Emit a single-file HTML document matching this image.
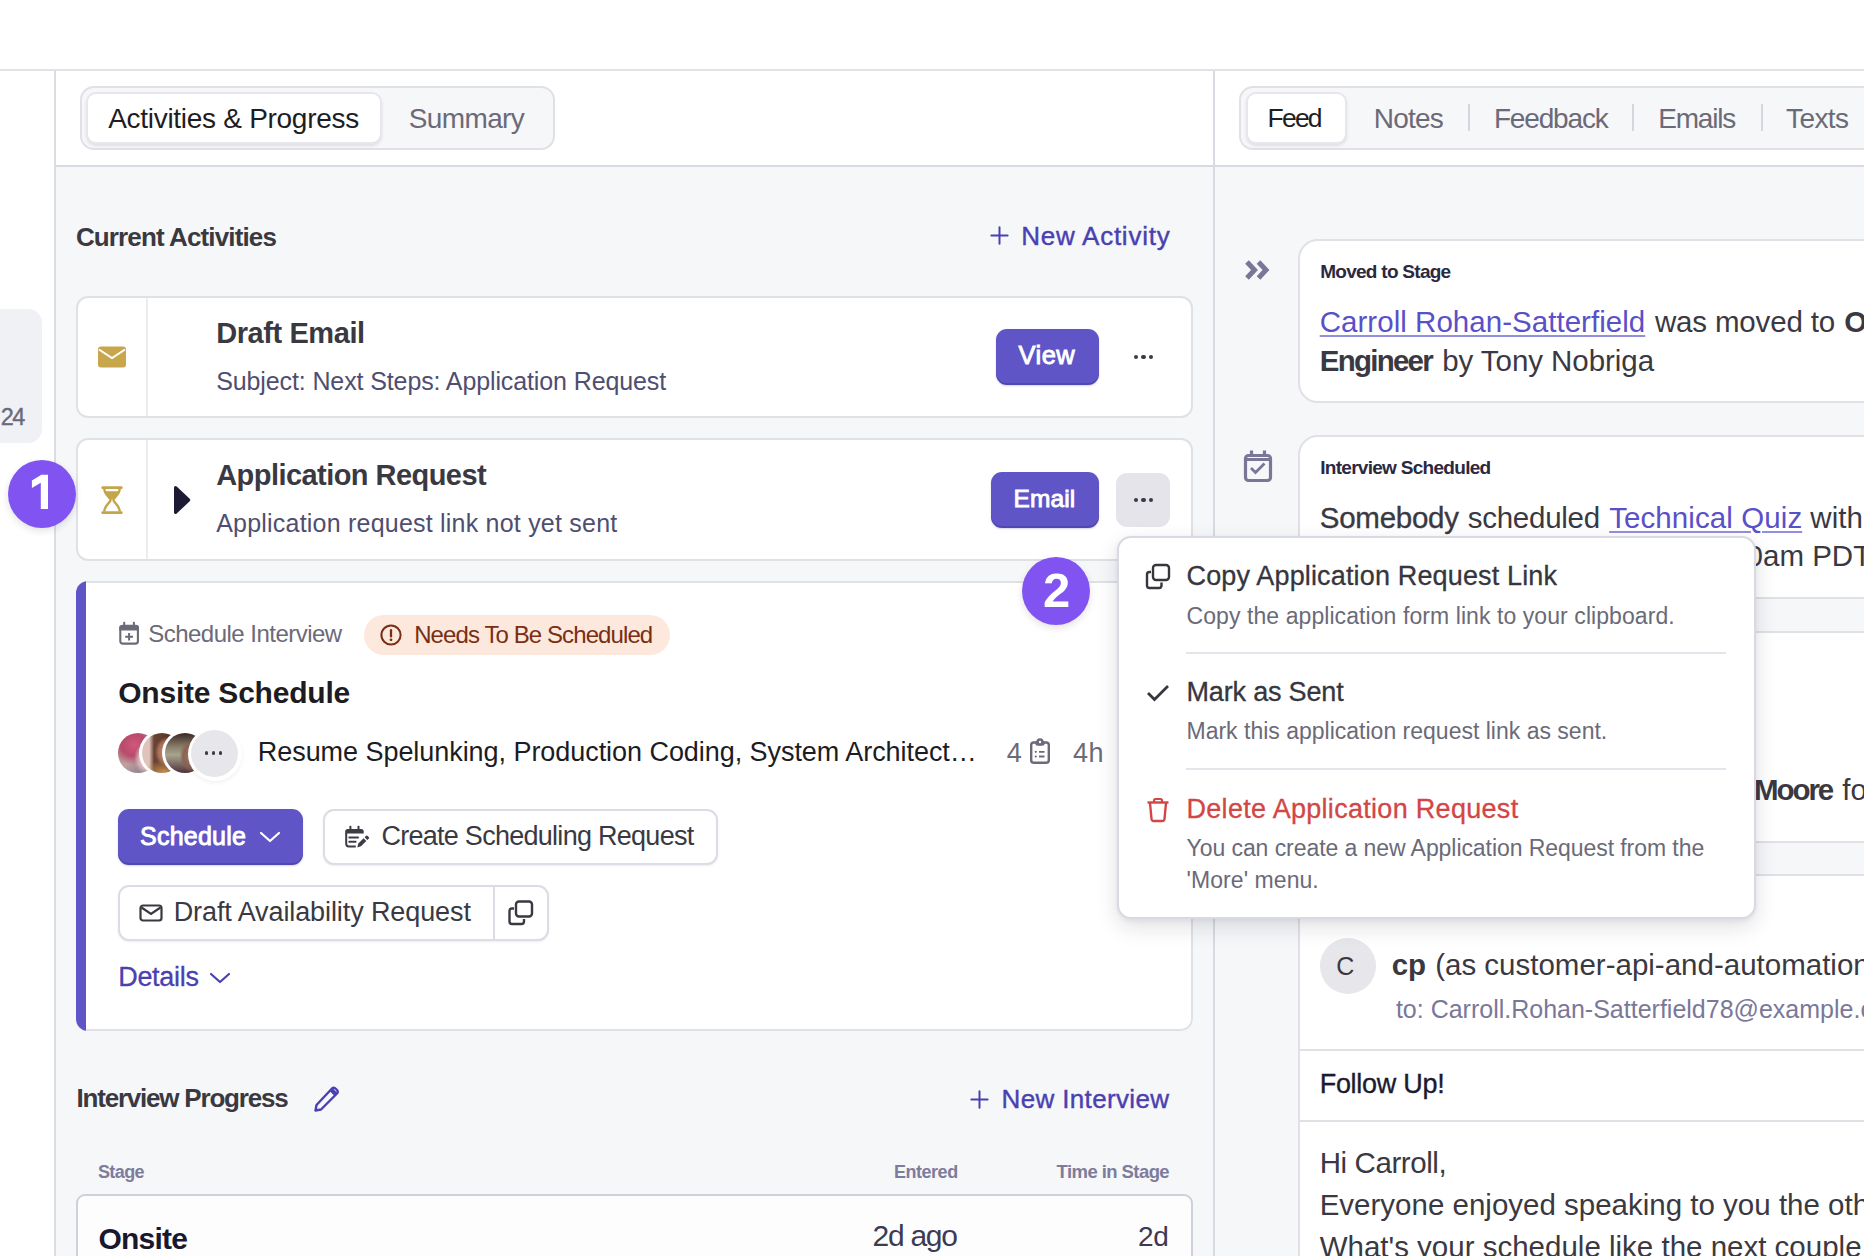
<!DOCTYPE html>
<html><head><meta charset="utf-8">
<style>
html,body{margin:0;padding:0;background:#fff;}
body{width:1864px;height:1256px;overflow:hidden;position:relative;font-family:"Liberation Sans",sans-serif;}
.b{position:absolute;}
.t{position:absolute;white-space:nowrap;}
</style></head><body>
<div class="b" style="left:0px;top:0px;width:1864px;height:70px;background:#fff;"></div>
<div class="b" style="left:0px;top:69px;width:1864px;height:2px;background:#e1e2e8;"></div>
<div class="b" style="left:0px;top:71px;width:54px;height:1185px;background:#fff;"></div>
<div class="b" style="left:54px;top:71px;width:2px;height:1185px;background:#dcdde3;"></div>
<div class="b" style="left:56px;top:71px;width:1157px;height:94px;background:#fff;"></div>
<div class="b" style="left:1215px;top:71px;width:649px;height:94px;background:#fff;"></div>
<div class="b" style="left:56px;top:165px;width:1808px;height:2px;background:#d8dae2;"></div>
<div class="b" style="left:56px;top:167px;width:1157px;height:1089px;background:#f6f7f9;"></div>
<div class="b" style="left:1215px;top:167px;width:649px;height:1089px;background:#f6f7f9;"></div>
<div class="b" style="left:1213px;top:71px;width:2px;height:1185px;background:#d8dae2;"></div>
<div class="b" style="left:-20px;top:309px;width:62px;height:134px;background:#f0f1f4;border-radius:14px;"></div>
<div class="t" style="left:0.70px;top:406.11px;font-size:23.50px;line-height:23.50px;color:#6b6a78;letter-spacing:-1.585px;-webkit-text-stroke:0.4px #6b6a78;">24</div>
<div class="b" style="left:80px;top:86px;width:475px;height:64px;background:#f6f7f9;border:2px solid #e0e0e7;border-radius:14px;box-sizing:border-box;"></div>
<div class="b" style="left:86px;top:92px;width:296px;height:51.5px;background:#fff;border:2px solid #e6e6ec;border-radius:10px;box-sizing:border-box;box-shadow:0 2px 3px rgba(30,30,60,0.10);"></div>
<div class="t" style="left:108.20px;top:105.00px;font-size:28.00px;line-height:28.00px;color:#1d1d22;letter-spacing:-0.288px;">Activities &amp; Progress</div>
<div class="t" style="left:408.80px;top:105.00px;font-size:28.00px;line-height:28.00px;color:#6b6a78;letter-spacing:-0.640px;">Summary</div>
<div class="b" style="left:1239px;top:86px;width:661px;height:64px;background:#f6f7f9;border:2px solid #e0e0e7;border-radius:14px;box-sizing:border-box;"></div>
<div class="b" style="left:1246px;top:92px;width:101px;height:51.5px;background:#fff;border:2px solid #e6e6ec;border-radius:10px;box-sizing:border-box;box-shadow:0 2px 3px rgba(30,30,60,0.10);"></div>
<div class="t" style="left:1267.60px;top:105.37px;font-size:26.50px;line-height:26.50px;color:#1d1d22;letter-spacing:-1.807px;">Feed</div>
<div class="t" style="left:1373.80px;top:105.00px;font-size:28.00px;line-height:28.00px;color:#6b6a78;letter-spacing:-0.770px;">Notes</div>
<div class="t" style="left:1493.90px;top:105.00px;font-size:28.00px;line-height:28.00px;color:#6b6a78;letter-spacing:-1.151px;">Feedback</div>
<div class="t" style="left:1658.20px;top:105.00px;font-size:28.00px;line-height:28.00px;color:#6b6a78;letter-spacing:-1.200px;">Emails</div>
<div class="t" style="left:1786.00px;top:105.00px;font-size:28.00px;line-height:28.00px;color:#6b6a78;letter-spacing:-0.595px;">Texts</div>
<div class="b" style="left:1468px;top:104px;width:2px;height:27px;background:#d6d6de;"></div>
<div class="b" style="left:1632px;top:104px;width:2px;height:27px;background:#d6d6de;"></div>
<div class="b" style="left:1761px;top:104px;width:2px;height:27px;background:#d6d6de;"></div>
<div class="t" style="left:75.90px;top:223.99px;font-size:26.00px;line-height:26.00px;color:#3a3942;letter-spacing:-0.871px;font-weight:700;">Current Activities</div>
<svg class="b" style="left:990px;top:226px" width="19" height="19" viewBox="0 0 21 21"><path d="M10.5 1.5v18M1.5 10.5h18" stroke="#4a40b0" stroke-width="2.2" fill="none" stroke-linecap="round"/></svg>
<div class="t" style="left:1021.20px;top:222.99px;font-size:26.00px;line-height:26.00px;color:#4a40b0;letter-spacing:0.760px;-webkit-text-stroke:0.4px #4a40b0;">New Activity</div>
<div class="b" style="left:76px;top:296px;width:1117px;height:122px;background:#fff;border:2px solid #e0e0e7;border-radius:12px;box-sizing:border-box;"></div>
<div class="b" style="left:146px;top:298px;width:2px;height:118px;background:#ececf1;"></div>
<svg class="b" style="left:97px;top:346px" width="30" height="22" viewBox="0 0 30 22"><rect x="1" y="0.5" width="28" height="21" rx="3" fill="#c8a74c"/><path d="M2 3.5 L15 12 L28 3.5" stroke="#fff" stroke-width="2" fill="none"/></svg>
<div class="t" style="left:216.20px;top:319.45px;font-size:29.00px;line-height:29.00px;color:#3a3942;letter-spacing:-0.412px;font-weight:700;">Draft Email</div>
<div class="t" style="left:216.20px;top:368.84px;font-size:25.00px;line-height:25.00px;color:#504e70;letter-spacing:-0.115px;">Subject: Next Steps: Application Request</div>
<div class="b" style="left:996px;top:329px;width:103px;height:56px;background:#5f55c6;border-radius:11px;box-shadow:inset 0 -2px 0 rgba(40,30,120,0.25), 0 1px 2px rgba(40,30,120,0.2);"></div>
<div class="t" style="left:1018.60px;top:343.41px;font-size:25.50px;line-height:25.50px;color:#fff;letter-spacing:0.458px;-webkit-text-stroke:0.9px #fff;">View</div>
<div class="b" style="left:1133.7px;top:354.5px;width:4.599999999999909px;height:4.600000000000023px;background:#3b3a44;border-radius:50%;"></div>
<div class="b" style="left:1141.2px;top:354.5px;width:4.599999999999909px;height:4.600000000000023px;background:#3b3a44;border-radius:50%;"></div>
<div class="b" style="left:1148.7px;top:354.5px;width:4.599999999999909px;height:4.600000000000023px;background:#3b3a44;border-radius:50%;"></div>
<div class="b" style="left:76px;top:438px;width:1117px;height:123px;background:#fff;border:2px solid #e0e0e7;border-radius:12px;box-sizing:border-box;"></div>
<div class="b" style="left:146px;top:440px;width:2px;height:119px;background:#ececf1;"></div>
<svg class="b" style="left:101px;top:486px" width="22" height="28" viewBox="0 0 22 28" fill="#c4a54a"><rect x="0.3" y="0.2" width="21.4" height="2.8" rx="1.3"/><rect x="0.3" y="25.2" width="21.4" height="2.8" rx="1.3"/><path d="M3.3 2.5 C3.3 9 9.6 11.5 9.6 14 C9.6 16.5 3.3 19 3.3 25.5 M18.7 2.5 C18.7 9 12.4 11.5 12.4 14 C12.4 16.5 18.7 19 18.7 25.5" stroke="#c4a54a" stroke-width="2.4" fill="none"/><path d="M4 5.3 H18 C17.5 9.5 12.5 11.5 11 13.8 C9.5 11.5 4.5 9.5 4 5.3Z"/></svg>
<svg class="b" style="left:173px;top:485px" width="18" height="30" viewBox="0 0 18 30"><polygon points="2.6,2.6 15.6,15 2.6,27.4" fill="#1d1b34" stroke="#1d1b34" stroke-width="3.2" stroke-linejoin="round"/></svg>
<div class="t" style="left:216.20px;top:461.45px;font-size:29.00px;line-height:29.00px;color:#3a3942;letter-spacing:-0.552px;font-weight:700;">Application Request</div>
<div class="t" style="left:216.20px;top:510.84px;font-size:25.00px;line-height:25.00px;color:#504e70;letter-spacing:0.215px;">Application request link not yet sent</div>
<div class="b" style="left:991px;top:472px;width:108px;height:56px;background:#5f55c6;border-radius:11px;box-shadow:inset 0 -2px 0 rgba(40,30,120,0.25), 0 1px 2px rgba(40,30,120,0.2);"></div>
<div class="t" style="left:1013.60px;top:487.26px;font-size:24.50px;line-height:24.50px;color:#fff;letter-spacing:0.113px;-webkit-text-stroke:0.9px #fff;">Email</div>
<div class="b" style="left:1116px;top:473px;width:54px;height:54px;background:#e4e4ea;border-radius:11px;"></div>
<div class="b" style="left:1133.7px;top:497.7px;width:4.599999999999909px;height:4.600000000000023px;background:#3b3a44;border-radius:50%;"></div>
<div class="b" style="left:1141.2px;top:497.7px;width:4.599999999999909px;height:4.600000000000023px;background:#3b3a44;border-radius:50%;"></div>
<div class="b" style="left:1148.7px;top:497.7px;width:4.599999999999909px;height:4.600000000000023px;background:#3b3a44;border-radius:50%;"></div>
<div class="b" style="left:76px;top:581px;width:1117px;height:450px;background:#fff;border-radius:12px;overflow:hidden;"><div class="b" style="left:0;top:0;width:10px;height:450px;background:#5f55c6;"></div><div class="b" style="left:10px;top:0;width:1107px;height:450px;border:2px solid #e0e0e7;border-left:none;border-radius:0 12px 12px 0;box-sizing:border-box;"></div></div>
<svg class="b" style="left:118px;top:621px" width="22" height="24" viewBox="0 0 22 24"><rect x="2.3" y="4.8" width="17.6" height="17.8" rx="2.4" stroke="#6b6a78" stroke-width="2.1" fill="none"/><path d="M1.3 9.4 V6.6 Q1.3 3.9 4 3.9 H18.2 Q20.9 3.9 20.9 6.6 V9.4 Z" fill="#6b6a78"/><rect x="5.2" y="0.8" width="2" height="4" rx="0.8" fill="#6b6a78"/><rect x="14.9" y="0.8" width="2" height="4" rx="0.8" fill="#6b6a78"/><path d="M11.1 12 v7.6 M7.2 15.8 h7.8" stroke="#6b6a78" stroke-width="2"/></svg>
<div class="t" style="left:148.20px;top:622.18px;font-size:24.00px;line-height:24.00px;color:#6b6a78;letter-spacing:-0.518px;">Schedule Interview</div>
<div class="b" style="left:364px;top:615px;width:306px;height:40px;background:#fde8de;border-radius:20px;"></div>
<svg class="b" style="left:378px;top:623px" width="26" height="26" viewBox="0 0 26 26"><circle cx="13" cy="12" r="9.6" stroke="#7a2e12" stroke-width="2" fill="none"/><path d="M13 7.2v6.2" stroke="#7a2e12" stroke-width="2.3" stroke-linecap="round"/><circle cx="13" cy="16.8" r="1.4" fill="#7a2e12"/></svg>
<div class="t" style="left:414.20px;top:622.68px;font-size:24.00px;line-height:24.00px;color:#7a2e12;letter-spacing:-0.902px;">Needs To Be Scheduled</div>
<div class="t" style="left:118.20px;top:677.61px;font-size:30.00px;line-height:30.00px;color:#1c1c22;letter-spacing:-0.218px;font-weight:700;">Onsite Schedule</div>
<div class="b" style="left:115.0px;top:730.0px;width:46.0px;height:46.0px;background:#fff;border-radius:50%;"></div>
<div class="b" style="left:118.0px;top:733.0px;width:40.0px;height:40.0px;background:radial-gradient(ellipse 34% 42% at 74% 64%, #eed8d6 0%, #dcbcbc 60%, rgba(220,188,188,0) 100%), radial-gradient(ellipse 58% 50% at 40% 30%, #d0587e 0%, #b84a6c 55%, rgba(184,74,108,0) 100%), linear-gradient(135deg, #a89080, #c0a0a0 50%, #6a6a88);border-radius:50%;"></div>
<div class="b" style="left:138.5px;top:730.0px;width:46.0px;height:46.0px;background:#fff;border-radius:50%;"></div>
<div class="b" style="left:141.5px;top:733.0px;width:40.0px;height:40.0px;background:radial-gradient(ellipse 30% 38% at 62% 48%, #c89478 0%, #a87058 70%, rgba(168,112,88,0) 100%), radial-gradient(ellipse 50% 30% at 55% 98%, #c89050 0%, rgba(200,144,80,0) 100%), linear-gradient(90deg, #e0c4bc 0 18%, #6a4434 30%, #4a2c1e 100%);border-radius:50%;"></div>
<div class="b" style="left:162.0px;top:730.0px;width:46.0px;height:46.0px;background:#fff;border-radius:50%;"></div>
<div class="b" style="left:165.0px;top:733.0px;width:40.0px;height:40.0px;background:radial-gradient(ellipse 32% 40% at 68% 58%, #a88070 0%, #8a6252 70%, rgba(138,98,82,0) 100%), linear-gradient(180deg, #3a2626 0%, #8a806a 35%, #a8a48e 55%, #50303a 100%);border-radius:50%;"></div>
<div class="b" style="left:187.5px;top:726.5px;width:54.0px;height:54.0px;background:#fff;border-radius:50%;box-shadow:0 2px 4px rgba(0,0,0,0.06);"></div>
<div class="b" style="left:190.8px;top:729.5px;width:47.0px;height:47.0px;background:#e6e6eb;border-radius:50%;"></div>
<div class="b" style="left:204.7px;top:751px;width:3.6000000000000227px;height:3.6000000000000227px;background:#3b3a44;border-radius:50%;"></div>
<div class="b" style="left:211.7px;top:751px;width:3.6000000000000227px;height:3.6000000000000227px;background:#3b3a44;border-radius:50%;"></div>
<div class="b" style="left:218.7px;top:751px;width:3.6000000000000227px;height:3.6000000000000227px;background:#3b3a44;border-radius:50%;"></div>
<div class="t" style="left:257.80px;top:739.14px;font-size:27.00px;line-height:27.00px;color:#1c1c22;letter-spacing:-0.053px;">Resume Spelunking, Production Coding, System Architect…</div>
<div class="t" style="left:1006.70px;top:739.94px;font-size:27.00px;line-height:27.00px;color:#6b6a78;letter-spacing:0.000px;">4</div>
<svg class="b" style="left:1030px;top:738px" width="20" height="26" viewBox="0 0 20 26" fill="#6b6a78"><rect x="1.2" y="4.5" width="17.6" height="20.3" rx="2.6" stroke="#6b6a78" stroke-width="2.4" fill="none"/><path d="M4.8 3.8 H15.2 L14 7.6 H6 Z"/><circle cx="10" cy="4" r="3.7"/><circle cx="10" cy="4" r="1.2" fill="#fff"/><circle cx="5.8" cy="13.8" r="1.1"/><circle cx="5.8" cy="18.5" r="1.1"/><path d="M9 13.8 H14.5 M9 18.5 H14.5" stroke="#6b6a78" stroke-width="1.8"/></svg>
<div class="t" style="left:1072.90px;top:739.94px;font-size:27.00px;line-height:27.00px;color:#6b6a78;letter-spacing:0.530px;">4h</div>
<div class="b" style="left:118px;top:809px;width:185px;height:56px;background:#5f55c6;border-radius:11px;box-shadow:inset 0 -2px 0 rgba(40,30,120,0.25), 0 1px 2px rgba(40,30,120,0.2);"></div>
<div class="t" style="left:140.10px;top:823.84px;font-size:25.00px;line-height:25.00px;color:#fff;letter-spacing:0.207px;-webkit-text-stroke:0.9px #fff;">Schedule</div>
<svg class="b" style="left:259px;top:830px" width="22" height="14" viewBox="0 0 22 14"><path d="M2 3 L11 11 L20 3" stroke="#fff" stroke-width="2.2" fill="none" stroke-linecap="round" stroke-linejoin="round"/></svg>
<div class="b" style="left:323px;top:809px;width:395px;height:56px;background:#fff;border:2px solid #dcdce4;border-radius:11px;box-sizing:border-box;box-shadow:0 1px 2px rgba(30,30,60,0.08);"></div>
<svg class="b" style="left:344px;top:825px" width="28" height="24" viewBox="0 0 28 24" fill="#3d3c44"><rect x="5.4" y="0.8" width="2" height="4" rx="0.8"/><rect x="13.5" y="0.8" width="2" height="4" rx="0.8"/><path d="M1.2 8.6 V6.6 Q1.2 4 3.8 4 H17.1 Q19.7 4 19.7 6.6 V8.6 Z"/><path d="M2.2 8 V18.8 Q2.2 21.4 4.8 21.4 H11.8" stroke="#3d3c44" stroke-width="2" fill="none"/><path d="M5.3 12.6 H14 M5.3 16.7 H11.6" stroke="#3d3c44" stroke-width="2" stroke-linecap="round"/><path d="M13.3 22.4 L14.3 18.6 L19.6 13.3 L22.3 16 L17 21.3 Z"/><path d="M20.6 12.3 L22.2 10.7 Q22.8 10.1 23.4 10.7 L24.9 12.2 Q25.5 12.8 24.9 13.4 L23.3 15 Z"/></svg>
<div class="t" style="left:381.40px;top:823.14px;font-size:27.00px;line-height:27.00px;color:#3a3942;letter-spacing:-0.725px;">Create Scheduling Request</div>
<div class="b" style="left:118px;top:885px;width:431px;height:56px;background:#fff;border:2px solid #dcdce4;border-radius:11px;box-sizing:border-box;box-shadow:0 1px 2px rgba(30,30,60,0.08);"></div>
<div class="b" style="left:493px;top:887px;width:2px;height:52px;background:#dcdce4;"></div>
<svg class="b" style="left:139px;top:904px" width="24" height="18" viewBox="0 0 24 18"><rect x="1.5" y="1.5" width="21" height="15" rx="2.5" stroke="#3a3942" stroke-width="2.2" fill="none"/><path d="M2.5 3.5 L12 10 L21.5 3.5" stroke="#3a3942" stroke-width="2.2" fill="none"/></svg>
<div class="t" style="left:173.70px;top:899.14px;font-size:27.00px;line-height:27.00px;color:#3a3942;letter-spacing:-0.096px;">Draft Availability Request</div>
<svg class="b" style="left:507px;top:900px" width="28" height="26" viewBox="0 0 28 26"><rect x="9" y="1.5" width="16" height="15" rx="3" stroke="#3a3942" stroke-width="2.4" fill="none"/><path d="M7 8.5 H5 Q2.5 8.5 2.5 11 V21.5 Q2.5 24 5 24 H14.5 Q17 24 17 21.5 V19" stroke="#3a3942" stroke-width="2.4" fill="none"/></svg>
<div class="t" style="left:118.20px;top:963.74px;font-size:27.00px;line-height:27.00px;color:#4a40b0;letter-spacing:-0.297px;-webkit-text-stroke:0.3px #4a40b0;">Details</div>
<svg class="b" style="left:209px;top:971px" width="22" height="14" viewBox="0 0 22 14"><path d="M2 3 L11 11 L20 3" stroke="#4a40b0" stroke-width="2.2" fill="none" stroke-linecap="round" stroke-linejoin="round"/></svg>
<div class="t" style="left:76.50px;top:1084.99px;font-size:26.00px;line-height:26.00px;color:#3a3942;letter-spacing:-1.206px;font-weight:700;">Interview Progress</div>
<svg class="b" style="left:312px;top:1085px" width="28" height="28" viewBox="0 0 28 28"><path d="M20 3.5 Q22 2 24 4 L25 5 Q26.5 7 25 8.5 L9 24.5 L3.5 25.5 L4.5 20 Z" stroke="#4a40b0" stroke-width="2.4" fill="none" stroke-linejoin="round"/><path d="M19 4.5 L24 9.5" stroke="#4a40b0" stroke-width="4"/></svg>
<svg class="b" style="left:970px;top:1089.5px" width="19" height="19" viewBox="0 0 21 21"><path d="M10.5 1.5v18M1.5 10.5h18" stroke="#4a40b0" stroke-width="2.2" fill="none" stroke-linecap="round"/></svg>
<div class="t" style="left:1001.60px;top:1085.99px;font-size:26.00px;line-height:26.00px;color:#4a40b0;letter-spacing:0.349px;-webkit-text-stroke:0.4px #4a40b0;">New Interview</div>
<div class="t" style="left:97.90px;top:1163.36px;font-size:18.00px;line-height:18.00px;color:#7e7c9c;letter-spacing:-0.587px;font-weight:700;">Stage</div>
<div class="t" style="left:893.90px;top:1163.46px;font-size:18.00px;line-height:18.00px;color:#7e7c9c;letter-spacing:-0.458px;font-weight:700;">Entered</div>
<div class="t" style="left:1056.60px;top:1163.04px;font-size:18.50px;line-height:18.50px;color:#7e7c9c;letter-spacing:-0.573px;font-weight:700;">Time in Stage</div>
<div class="b" style="left:76px;top:1194px;width:1117px;height:106px;background:#fcfdfc;border:2px solid #d0d0dc;border-radius:9px;box-sizing:border-box;"></div>
<div class="t" style="left:98.40px;top:1224.31px;font-size:30.00px;line-height:30.00px;color:#1a1830;letter-spacing:-0.780px;font-weight:700;">Onsite</div>
<div class="t" style="left:872.60px;top:1221.20px;font-size:30.00px;line-height:30.00px;color:#3c3a55;letter-spacing:-1.280px;">2d ago</div>
<div class="t" style="left:1138.00px;top:1222.90px;font-size:28.00px;line-height:28.00px;color:#3c3a55;letter-spacing:-0.280px;">2d</div>
<svg class="b" style="left:1244px;top:259px" width="28" height="22" viewBox="0 0 28 22"><path d="M3 3 L10.5 11 L3 19 M14.5 3 L22 11 L14.5 19" stroke="#7a7698" stroke-width="5" fill="none" stroke-linejoin="miter"/></svg>
<div class="b" style="left:1298px;top:239px;width:602px;height:164px;background:#fff;border:2px solid #e0e0e7;border-radius:20px;box-sizing:border-box;"></div>
<div class="t" style="left:1320.20px;top:261.92px;font-size:19.00px;line-height:19.00px;color:#2b2940;letter-spacing:-0.724px;font-weight:700;">Moved to Stage</div>
<div class="t" style="left:1319.70px;top:306.63px;font-size:29.50px;line-height:29.50px;color:#5a50c8;letter-spacing:0.036px;text-decoration:underline;text-decoration-thickness:2px;text-underline-offset:2.5px;text-decoration-color:#948ee0;">Carroll Rohan-Satterfield</div>
<div class="t" style="left:1654.95px;top:306.63px;font-size:29.50px;line-height:29.50px;color:#3a3942;letter-spacing:-0.160px;">was moved to</div>
<div class="t" style="left:1844.20px;top:306.63px;font-size:29.50px;line-height:29.50px;color:#3a3942;letter-spacing:0.000px;font-weight:700;">Onsite</div>
<div class="t" style="left:1319.70px;top:346.03px;font-size:29.50px;line-height:29.50px;color:#3a3942;letter-spacing:-1.737px;font-weight:700;">Engineer</div>
<div class="t" style="left:1442.20px;top:346.03px;font-size:29.50px;line-height:29.50px;color:#3a3942;letter-spacing:-0.050px;">by Tony Nobriga</div>
<svg class="b" style="left:1243px;top:449px" width="30" height="34" viewBox="0 0 30 34"><rect x="2.5" y="6.5" width="25" height="25" rx="3" stroke="#7a7698" stroke-width="3.2" fill="none"/><path d="M2.5 9 h25 v3 h-25z" fill="#7a7698"/><path d="M8.5 1.5v6M21.5 1.5v6" stroke="#7a7698" stroke-width="3.2"/><path d="M8 19 L12.5 23.5 L21.5 14.5" stroke="#7a7698" stroke-width="2.8" fill="none"/></svg>
<div class="b" style="left:1298px;top:435px;width:602px;height:164px;background:#fff;border:2px solid #e0e0e7;border-radius:20px;box-sizing:border-box;"></div>
<div class="t" style="left:1320.20px;top:457.92px;font-size:19.00px;line-height:19.00px;color:#2b2940;letter-spacing:-0.707px;font-weight:700;">Interview Scheduled</div>
<div class="t" style="left:1319.80px;top:503.03px;font-size:29.50px;line-height:29.50px;color:#3a3942;letter-spacing:-0.259px;-webkit-text-stroke:0.35px #3a3942;">Somebody</div>
<div class="t" style="left:1467.70px;top:503.03px;font-size:29.50px;line-height:29.50px;color:#3a3942;letter-spacing:-0.252px;">scheduled</div>
<div class="t" style="left:1609.20px;top:503.03px;font-size:29.50px;line-height:29.50px;color:#5a50c8;letter-spacing:0.085px;text-decoration:underline;text-decoration-thickness:2px;text-underline-offset:2.5px;text-decoration-color:#948ee0;">Technical Quiz</div>
<div class="t" style="left:1810.35px;top:503.03px;font-size:29.50px;line-height:29.50px;color:#3a3942;letter-spacing:0.000px;">with</div>
<div class="t" style="left:1689.20px;top:541.23px;font-size:29.50px;line-height:29.50px;color:#3a3942;letter-spacing:0.000px;">10:00am PDT</div>
<div class="b" style="left:1298px;top:631px;width:602px;height:212px;background:#fff;border:2px solid #e0e0e7;border-radius:20px;box-sizing:border-box;"></div>
<div class="t" style="left:1754.00px;top:775.03px;font-size:29.50px;line-height:29.50px;color:#3a3942;letter-spacing:-2.075px;font-weight:700;">Moore</div>
<div class="t" style="left:1842.20px;top:775.03px;font-size:29.50px;line-height:29.50px;color:#3a3942;letter-spacing:0.000px;">for</div>
<div class="b" style="left:1298px;top:874px;width:602px;height:426px;background:#fff;border:2px solid #e0e0e7;border-radius:20px;box-sizing:border-box;"></div>
<div class="b" style="left:1320px;top:938px;width:56px;height:56px;background:#e6e6eb;border-radius:50%;"></div>
<div class="t" style="left:1336.20px;top:953.84px;font-size:25.00px;line-height:25.00px;color:#3a3942;letter-spacing:0.000px;">C</div>
<div class="t" style="left:1391.70px;top:950.43px;font-size:29.50px;line-height:29.50px;color:#3a3942;letter-spacing:0.000px;font-weight:700;">cp</div>
<div class="t" style="left:1435.20px;top:950.43px;font-size:29.50px;line-height:29.50px;color:#3a3942;letter-spacing:0.000px;">(as customer-api-and-automation)</div>
<div class="t" style="left:1395.90px;top:997.44px;font-size:25.00px;line-height:25.00px;color:#7a7898;letter-spacing:0.000px;">to: Carroll.Rohan-Satterfield78@example.com</div>
<div class="b" style="left:1300px;top:1049px;width:600px;height:2px;background:#e0e0e7;"></div>
<div class="t" style="left:1319.70px;top:1071.14px;font-size:27.00px;line-height:27.00px;color:#1c1a30;letter-spacing:-0.286px;-webkit-text-stroke:0.35px #1c1a30;">Follow Up!</div>
<div class="b" style="left:1300px;top:1120px;width:600px;height:2px;background:#e0e0e7;"></div>
<div class="t" style="left:1319.70px;top:1148.03px;font-size:29.50px;line-height:29.50px;color:#3a3942;letter-spacing:-0.413px;">Hi Carroll,</div>
<div class="t" style="left:1319.70px;top:1190.03px;font-size:29.50px;line-height:29.50px;color:#3a3942;letter-spacing:0.000px;">Everyone enjoyed speaking to you the other day.</div>
<div class="t" style="left:1319.70px;top:1231.53px;font-size:29.50px;line-height:29.50px;color:#3a3942;letter-spacing:0.000px;">What's your schedule like the next couple of days?</div>
<div class="b" style="left:1116.5px;top:535.5px;width:639.5px;height:383.5px;background:#fff;border:2px solid #d9d9e2;border-radius:14px;box-sizing:border-box;box-shadow:0 8px 22px rgba(20,20,50,0.13), 0 2px 5px rgba(20,20,50,0.06);"></div>
<svg class="b" style="left:1144px;top:563px" width="28" height="28" viewBox="0 0 28 28"><rect x="9" y="2" width="16" height="15" rx="3" stroke="#36363e" stroke-width="2.4" fill="none"/><path d="M7 9 H5.5 Q3 9 3 11.5 V22.5 Q3 25 5.5 25 H15 Q17.5 25 17.5 22.5 V19.5" stroke="#36363e" stroke-width="2.4" fill="none"/></svg>
<div class="t" style="left:1186.50px;top:562.84px;font-size:27.00px;line-height:27.00px;color:#36363e;letter-spacing:0.154px;-webkit-text-stroke:0.3px #36363e;">Copy Application Request Link</div>
<div class="t" style="left:1186.50px;top:604.53px;font-size:23.00px;line-height:23.00px;color:#6b6a78;letter-spacing:0.077px;">Copy the application form link to your clipboard.</div>
<div class="b" style="left:1186px;top:652px;width:540px;height:2px;background:#e4e4ea;"></div>
<svg class="b" style="left:1145px;top:683px" width="26" height="20" viewBox="0 0 26 20"><path d="M3 10 L9.5 16.5 L23 3" stroke="#36363e" stroke-width="2.8" fill="none"/></svg>
<div class="t" style="left:1186.50px;top:678.94px;font-size:27.00px;line-height:27.00px;color:#36363e;letter-spacing:-0.175px;-webkit-text-stroke:0.3px #36363e;">Mark as Sent</div>
<div class="t" style="left:1186.50px;top:720.03px;font-size:23.00px;line-height:23.00px;color:#6b6a78;letter-spacing:0.003px;">Mark this application request link as sent.</div>
<div class="b" style="left:1186px;top:768px;width:540px;height:2px;background:#e4e4ea;"></div>
<svg class="b" style="left:1145px;top:797px" width="26" height="26" viewBox="0 0 26 26"><path d="M2.5 5.5 h21" stroke="#d24646" stroke-width="2.4"/><path d="M9 5 V3.5 Q9 2 10.5 2 H15.5 Q17 2 17 3.5 V5" stroke="#d24646" stroke-width="2.2" fill="none"/><path d="M5 6 L6.5 22 Q6.7 24 8.7 24 H17.3 Q19.3 24 19.5 22 L21 6" stroke="#d24646" stroke-width="2.4" fill="none"/></svg>
<div class="t" style="left:1186.50px;top:795.74px;font-size:27.00px;line-height:27.00px;color:#d24646;letter-spacing:0.297px;-webkit-text-stroke:0.3px #d24646;">Delete Application Request</div>
<div class="t" style="left:1186.50px;top:836.53px;font-size:23.00px;line-height:23.00px;color:#6b6a78;letter-spacing:-0.065px;">You can create a new Application Request from the</div>
<div class="t" style="left:1186.50px;top:869.03px;font-size:23.00px;line-height:23.00px;color:#6b6a78;letter-spacing:0.067px;">'More' menu.</div>
<div class="b" style="left:7.5px;top:460px;width:68.0px;height:68px;background:#8154f1;border-radius:50%;box-shadow:0 3px 7px rgba(30,30,40,0.13);"></div>
<div class="b" style="left:1022px;top:556.5px;width:68px;height:68.0px;background:#8154f1;border-radius:50%;box-shadow:0 3px 7px rgba(30,30,40,0.13);"></div>
<svg class="b" style="left:30px;top:473px" width="20" height="38" viewBox="0 0 20 38"><polygon points="1.9,7.6 11.4,1.7 18,1.7 18,36.1 10.8,36.1 10.8,9.8 1.9,15" fill="#fff"/></svg>
<div class="t" style="left:1042.90px;top:566.22px;font-size:49.00px;line-height:49.00px;color:#fff;letter-spacing:0.000px;font-weight:700;">2</div>
</body></html>
